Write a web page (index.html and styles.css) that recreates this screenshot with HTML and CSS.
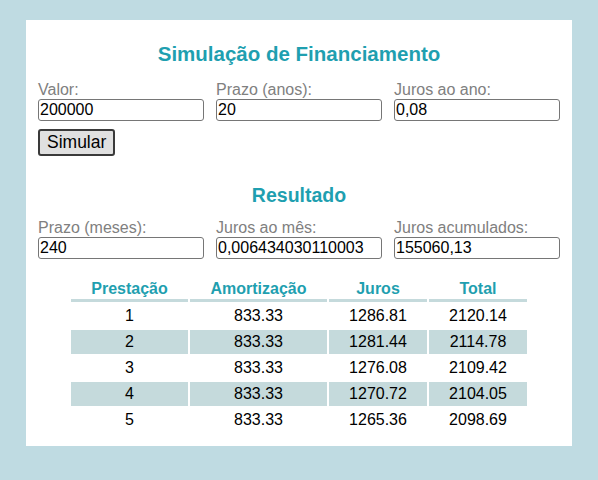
FILE: index.html
```html
<!DOCTYPE html>
<html lang="pt">
<head>
<meta charset="utf-8">
<title>Simulação de Financiamento</title>
<link rel="stylesheet" href="styles.css">
</head>
<body>
<main class="card">
  <h2 class="title">Simulação de Financiamento</h2>
  <div class="fields">
    <label class="field"><span class="label">Valor:</span><input class="input" type="text" value="200000"></label>
    <label class="field"><span class="label">Prazo (anos):</span><input class="input" type="text" value="20"></label>
    <label class="field"><span class="label">Juros ao ano:</span><input class="input" type="text" value="0,08"></label>
  </div>
  <div class="actions"><button class="btn" type="button">Simular</button></div>
  <h2 class="title result-title">Resultado</h2>
  <div class="fields result-fields">
    <label class="field"><span class="label">Prazo (meses):</span><input class="input" type="text" value="240"></label>
    <label class="field"><span class="label">Juros ao mês:</span><input class="input" type="text" value="0,006434030110003"></label>
    <label class="field"><span class="label">Juros acumulados:</span><input class="input" type="text" value="155060,13"></label>
  </div>
  <table class="table">
    <thead>
      <tr><th class="c1">Prestação</th><th class="c2">Amortização</th><th class="c3">Juros</th><th class="c4">Total</th></tr>
    </thead>
    <tbody>
      <tr><td>1</td><td>833.33</td><td>1286.81</td><td>2120.14</td></tr>
      <tr><td>2</td><td>833.33</td><td>1281.44</td><td>2114.78</td></tr>
      <tr><td>3</td><td>833.33</td><td>1276.08</td><td>2109.42</td></tr>
      <tr><td>4</td><td>833.33</td><td>1270.72</td><td>2104.05</td></tr>
      <tr><td>5</td><td>833.33</td><td>1265.36</td><td>2098.69</td></tr>
    </tbody>
  </table>
</main>
</body>
</html>
```
FILE: styles.css
```css
html, body {
  margin: 0;
  padding: 0;
}
body {
  background: #bfdbe2;
  font-family: "Liberation Sans", Arial, sans-serif;
  padding: 20px 26px 35px;
}
.card {
  width: 546px;
  box-sizing: border-box;
  background: #ffffff;
  padding: 22px 12px 12px;
}
.title {
  margin: 0;
  text-align: center;
  color: #1f9fb0;
  font-size: 20.5px;
  font-weight: bold;
  line-height: 24px;
}
.fields {
  display: grid;
  grid-template-columns: repeat(3, 1fr);
  column-gap: 12px;
  margin-top: 15px;
}
.field {
  display: flex;
  flex-direction: column;
}
.label {
  color: #808080;
  font-size: 16px;
  line-height: 18px;
}
.input {
  box-sizing: border-box;
  width: 100%;
  height: 22px;
  margin: 0;
  padding: 1px 1px;
  border: 1px solid #767676;
  border-radius: 3px;
  font-family: "Liberation Sans", Arial, sans-serif;
  font-size: 16px;
  color: #000;
  background: #fff;
}
.actions {
  margin-top: 8px;
}
.btn {
  box-sizing: border-box;
  height: 27px;
  padding: 0 7px;
  font-family: "Liberation Sans", Arial, sans-serif;
  font-size: 17.5px;
  color: #000;
  background: #e0e0e0;
  border: 2px solid #3a3a3a;
  border-radius: 3px;
}
.result-title {
  margin-top: 27px;
  font-size: 19.5px;
}
.result-fields {
  margin-top: 12px;
}
.table {
  margin: 17px auto 0;
  border-spacing: 2px;
  font-size: 16px;
}
.table th {
  color: #1f9fb0;
  font-weight: bold;
  height: 21px;
  padding: 0;
  border-bottom: 3px solid #c5dadc;
  text-align: center;
}
.table td {
  height: 24px;
  padding: 0;
  text-align: center;
  color: #000;
}
.table tbody tr:nth-child(even) td {
  background: #c5dadc;
}
.c1 { width: 117px; }
.c2 { width: 137px; }
.c3 { width: 98px; }
.c4 { width: 98px; }
```
